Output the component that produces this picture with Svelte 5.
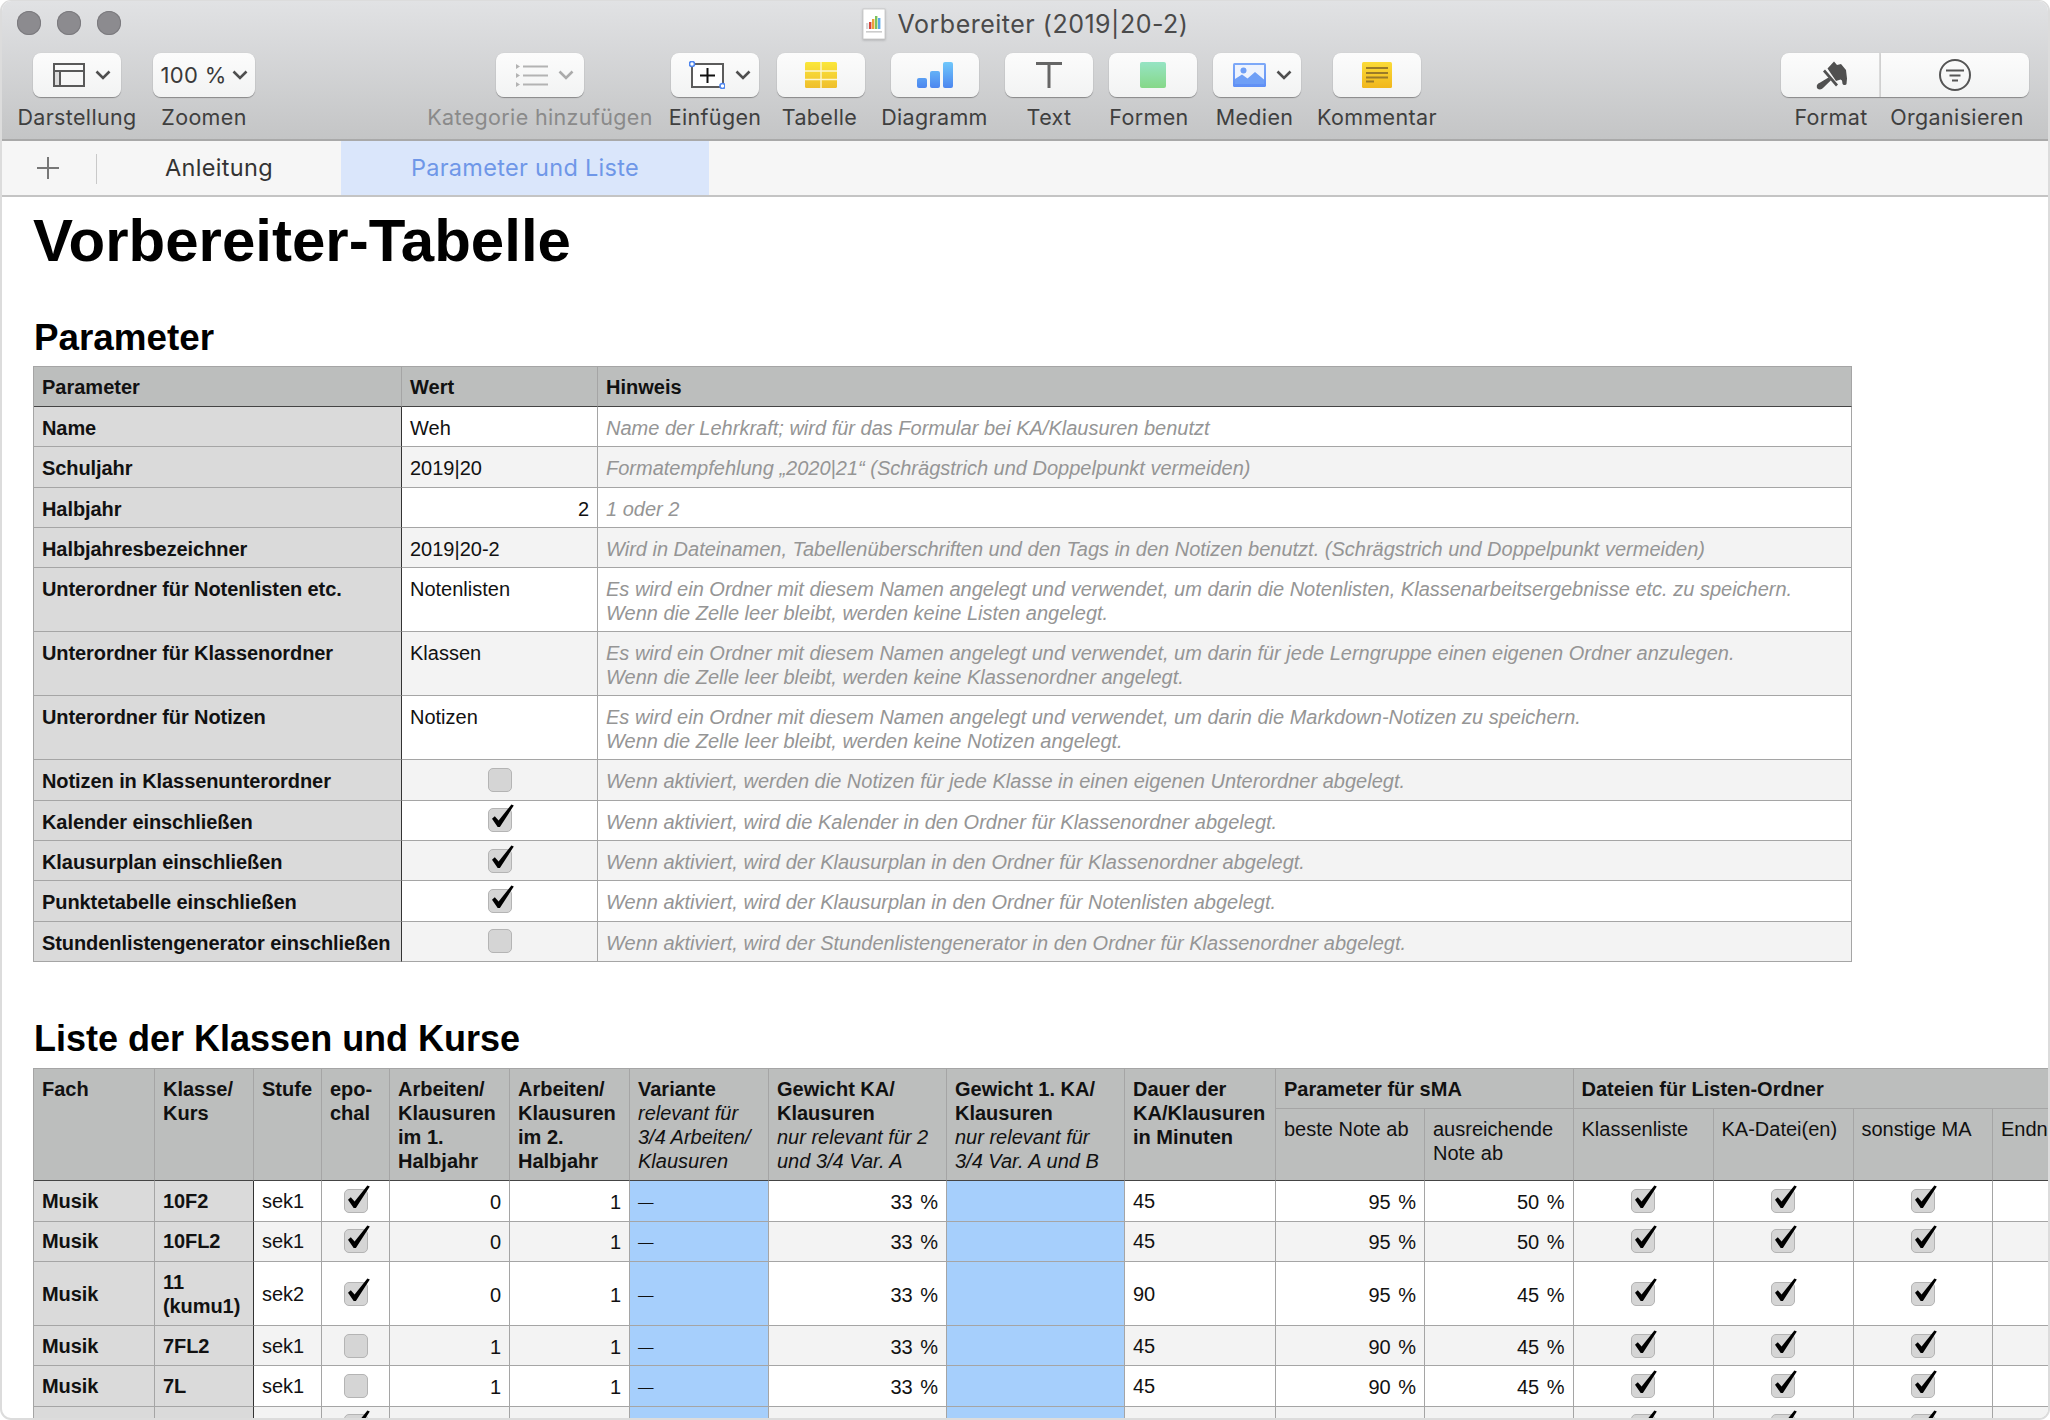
<script>
	const params = [
		{ name: 'Name', value: 'Weh', hint: ['Name der Lehrkraft; wird für das Formular bei KA/Klausuren benutzt'] },
		{ name: 'Schuljahr', value: '2019|20', hint: ['Formatempfehlung „2020|21“ (Schrägstrich und Doppelpunkt vermeiden)'] },
		{ name: 'Halbjahr', value: '2', num: true, hint: ['1 oder 2'] },
		{ name: 'Halbjahresbezeichner', value: '2019|20-2', hint: ['Wird in Dateinamen, Tabellenüberschriften und den Tags in den Notizen benutzt. (Schrägstrich und Doppelpunkt vermeiden)'] },
		{ name: 'Unterordner für Notenlisten etc.', value: 'Notenlisten', hint: ['Es wird ein Ordner mit diesem Namen angelegt und verwendet, um darin die Notenlisten, Klassenarbeitsergebnisse etc. zu speichern.', 'Wenn die Zelle leer bleibt, werden keine Listen angelegt.'] },
		{ name: 'Unterordner für Klassenordner', value: 'Klassen', hint: ['Es wird ein Ordner mit diesem Namen angelegt und verwendet, um darin für jede Lerngruppe einen eigenen Ordner anzulegen.', 'Wenn die Zelle leer bleibt, werden keine Klassenordner angelegt.'] },
		{ name: 'Unterordner für Notizen', value: 'Notizen', hint: ['Es wird ein Ordner mit diesem Namen angelegt und verwendet, um darin die Markdown-Notizen zu speichern.', 'Wenn die Zelle leer bleibt, werden keine Notizen angelegt.'] },
		{ name: 'Notizen in Klassenunterordner', check: false, hint: ['Wenn aktiviert, werden die Notizen für jede Klasse in einen eigenen Unterordner abgelegt.'] },
		{ name: 'Kalender einschließen', check: true, hint: ['Wenn aktiviert, wird die Kalender in den Ordner für Klassenordner abgelegt.'] },
		{ name: 'Klausurplan einschließen', check: true, hint: ['Wenn aktiviert, wird der Klausurplan in den Ordner für Klassenordner abgelegt.'] },
		{ name: 'Punktetabelle einschließen', check: true, hint: ['Wenn aktiviert, wird der Klausurplan in den Ordner für Notenlisten abgelegt.'] },
		{ name: 'Stundenlistengenerator einschließen', check: false, hint: ['Wenn aktiviert, wird der Stundenlistengenerator in den Ordner für Klassenordner abgelegt.'] }
	];

	const heads = [
		{ bold: ['Fach'] },
		{ bold: ['Klasse/', 'Kurs'] },
		{ bold: ['Stufe'] },
		{ bold: ['epo-', 'chal'] },
		{ bold: ['Arbeiten/', 'Klausuren', 'im 1.', 'Halbjahr'] },
		{ bold: ['Arbeiten/', 'Klausuren', 'im 2.', 'Halbjahr'] },
		{ bold: ['Variante'], em: ['relevant für', '3/4 Arbeiten/', 'Klausuren'] },
		{ bold: ['Gewicht KA/', 'Klausuren'], em: ['nur relevant für 2', 'und 3/4 Var. A'] },
		{ bold: ['Gewicht 1. KA/', 'Klausuren'], em: ['nur relevant für', '3/4 Var. A und B'] },
		{ bold: ['Dauer der', 'KA/Klausuren', 'in Minuten'] }
	];

	const courses = [
		{ klasse: ['10F2'], stufe: 'sek1', epochal: true, a1: 0, a2: 1, dauer: 45, beste: 95, ausr: 50 },
		{ klasse: ['10FL2'], stufe: 'sek1', epochal: true, a1: 0, a2: 1, dauer: 45, beste: 95, ausr: 50 },
		{ klasse: ['11', '(kumu1)'], stufe: 'sek2', epochal: true, a1: 0, a2: 1, dauer: 90, beste: 95, ausr: 45, tall: true },
		{ klasse: ['7FL2'], stufe: 'sek1', epochal: false, a1: 1, a2: 1, dauer: 45, beste: 90, ausr: 45 },
		{ klasse: ['7L'], stufe: 'sek1', epochal: false, a1: 1, a2: 1, dauer: 45, beste: 90, ausr: 45 },
		{ klasse: ['8F1'], stufe: 'sek1', epochal: true, a1: 1, a2: 1, dauer: 45, beste: 90, ausr: 45 }
	];
</script>

{#snippet chevron(muted = false)}
	<svg class="chev" class:muted viewBox="0 0 16 10" width="16" height="10">
		<path d="M1.500 1.500 8 8l6.500-6.500" />
	</svg>
{/snippet}

{#snippet checkbox(on)}
	<span class="box">
		{#if on}
			<svg class="tick" viewBox="0 0 24 24" width="24" height="24">
				<path d="M4 10.700 6.800 8.300 10.600 12.600 23.400-3.600 25.800-2.400 11.900 19H9.700Z" />
			</svg>
		{/if}
	</span>
{/snippet}

<div class="window">
	<header class="chrome">
		<div class="titlebar">
			<div class="lights"><i></i><i></i><i></i></div>
			<div class="title">
				<svg class="doc" viewBox="0 0 24 32" width="24" height="32">
					<rect x="1" y="1" width="22" height="30" fill="#fff" stroke="#c4c4c4" stroke-width=".8" />
					<rect x="4" y="15" width="2.400" height="6" fill="#d8d8d8" />
					<rect x="7" y="14" width="2.400" height="7" fill="#d6433c" />
					<rect x="10" y="11" width="2.400" height="10" fill="#e9a13a" />
					<rect x="13" y="8" width="2.400" height="13" fill="#7cc35c" />
					<rect x="16" y="10" width="2.400" height="11" fill="#5aa9e8" />
					<rect x="4" y="23" width="16" height="1.600" fill="#ccc" />
				</svg>
				<span>Vorbereiter (2019|20-2)</span>
			</div>
		</div>

		<div class="toolbar">
			<div class="tool">
				<div class="btn dd">
					<svg viewBox="0 0 32 24" width="32" height="24">
						<rect x="1" y="8" width="6" height="15" fill="#dcdcdc" />
						<rect x="1" y="1" width="30" height="22" fill="none" stroke="#595959" stroke-width="2" />
						<path d="M1 8h30M7 8v15" fill="none" stroke="#595959" stroke-width="2" />
					</svg>
					{@render chevron()}
				</div>
				<span>Darstellung</span>
			</div>
			<div></div>
			<div class="tool">
				<div class="btn wide"><b>100 %</b>{@render chevron()}</div>
				<span>Zoomen</span>
			</div>
			<div></div>
			<div class="tool off">
				<div class="btn dd">
					<svg viewBox="0 0 32 24" width="32" height="24" fill="#b3b3b3">
						<path d="M0 1l4 2.500L0 6zM0 10l4 2.500L0 15zM0 19l4 2.500L0 24z" />
						<path d="M7 2.500h25v2H7zM7 11.500h25v2H7zM7 20.500h25v2H7z" />
					</svg>
					{@render chevron(true)}
				</div>
				<span>Kategorie hinzufügen</span>
			</div>
			<div></div>
			<div class="tool">
				<div class="btn dd">
					<svg viewBox="0 0 36 28" width="36" height="28">
						<rect x="3" y="3" width="31" height="23" fill="#fff" stroke="#5c5c5c" stroke-width="2" />
						<path d="M18.500 7v15M11 14.500h15" stroke="#111" stroke-width="2" />
						<circle cx="3" cy="3" r="2.500" fill="#fff" stroke="#4f86ee" stroke-width="1.600" />
						<circle cx="33.500" cy="25" r="2.500" fill="#fff" stroke="#4f86ee" stroke-width="1.600" />
					</svg>
					{@render chevron()}
				</div>
				<span>Einfügen</span>
			</div>
			<div class="tool nudge-s">
				<div class="btn">
					<svg viewBox="0 0 32 26" width="32" height="26">
						<defs>
							<linearGradient id="gy" x1="0" y1="0" x2="0" y2="1">
								<stop offset="0" stop-color="#fbe73a" />
								<stop offset="1" stop-color="#efbe2c" />
							</linearGradient>
						</defs>
						<rect width="32" height="26" rx="1.500" fill="url(#gy)" />
						<path d="M16 0v26M0 9h32M0 17.500h32" stroke="#fdf6cf" stroke-width="1.400" />
					</svg>
				</div>
				<span>Tabelle</span>
			</div>
			<div class="tool">
				<div class="btn">
					<svg viewBox="0 0 36 26" width="36" height="26">
						<defs>
							<linearGradient id="gb" x1="0" y1="0" x2="0" y2="26" gradientUnits="userSpaceOnUse">
								<stop offset="0" stop-color="#70c8fb" />
								<stop offset="1" stop-color="#4c86ef" />
							</linearGradient>
						</defs>
						<g fill="url(#gb)">
							<rect x="0" y="16" width="10" height="10" rx="2" />
							<rect x="13" y="9" width="10" height="17" rx="2" />
							<rect x="26" y="0" width="10" height="26" rx="2" />
						</g>
					</svg>
				</div>
				<span>Diagramm</span>
			</div>
			<div class="tool">
				<div class="btn">
					<svg viewBox="0 0 26 26" width="26" height="26">
						<path d="M0 1.500h26M13 1.500V26" fill="none" stroke="#666" stroke-width="3" />
					</svg>
				</div>
				<span>Text</span>
			</div>
			<div class="tool nudge-l">
				<div class="btn">
					<svg viewBox="0 0 26 26" width="26" height="26">
						<defs>
							<linearGradient id="gg" x1="0" y1="0" x2="0" y2="1">
								<stop offset="0" stop-color="#96e4c4" />
								<stop offset="1" stop-color="#86d888" />
							</linearGradient>
						</defs>
						<rect width="26" height="26" rx="2" fill="url(#gg)" />
					</svg>
				</div>
				<span>Formen</span>
			</div>
			<div class="tool nudge-m">
				<div class="btn dd">
					<svg viewBox="0 0 33 24" width="33" height="24">
						<defs>
							<linearGradient id="gm" x1="0" y1="0" x2="0" y2="1">
								<stop offset="0" stop-color="#7ea9f8" />
								<stop offset="1" stop-color="#5f8ff5" />
							</linearGradient>
						</defs>
						<rect width="33" height="24" rx="1.500" fill="url(#gm)" />
						<rect x="2" y="2" width="29" height="15" fill="#eef3fd" />
						<path d="M2 21V16l7-4.500 5.500 4L22 9l9 7.500V21z" fill="#6f9ff6" />
						<circle cx="10.500" cy="7.500" r="3" fill="#6f9ff6" />
					</svg>
					{@render chevron()}
				</div>
				<span>Medien</span>
			</div>
			<div class="tool">
				<div class="btn">
					<svg viewBox="0 0 30 26" width="30" height="26">
						<defs>
							<linearGradient id="gn" x1="0" y1="0" x2="0" y2="1">
								<stop offset="0" stop-color="#fbdb38" />
								<stop offset="1" stop-color="#f1b71c" />
							</linearGradient>
						</defs>
						<rect width="30" height="26" rx="1.500" fill="url(#gn)" />
						<path d="M4 6h22M4 11h22M4 15.500h22M4 19.500h8" stroke="#9b7b28" stroke-width="2" />
					</svg>
				</div>
				<span>Kommentar</span>
			</div>
			<div></div>
			<div class="tool split-l">
				<div class="btn">
					<svg viewBox="10 8 36 32" width="36" height="32" fill="#505050">
						<path d="M23.500 17.500 30 10.500l3 3.500 4-1 5 6 1 8.500-.5 5.500c-.8 1.600-3.400 1.400-4-.3l-.5-3.200-1.500-1-4.500 1.500z" />
						<path d="M19 20.500l2-2 13 15-2 2z" />
						<path d="M24.500 26.500l2.500 2.800-8 7.800c-1.500 2-5.500 2-6.200-.8-.5-2.500 1.500-4 3-4.500z" />
					</svg>
				</div>
				<span>Format</span>
			</div>
			<div class="tool split-r">
				<div class="btn">
					<svg viewBox="0 0 32 32" width="32" height="32" fill="none" stroke="#555" stroke-width="2">
						<circle cx="16" cy="16" r="15" />
						<path d="M7 11.500h18M10.500 16.500h11M13 21.500h6" />
					</svg>
				</div>
				<span>Organisieren</span>
			</div>
		</div>
	</header>

	<nav class="tabs">
		<span class="plus"></span>
		<span class="sep"></span>
		<span class="tab">Anleitung</span>
		<span class="tab active">Parameter und Liste</span>
	</nav>

	<main>
		<h1>Vorbereiter-Tabelle</h1>

		<h2 class="first">Parameter</h2>
		<div class="sheet params">
			<div class="c head">Parameter</div>
			<div class="c head">Wert</div>
			<div class="c head">Hinweis</div>
			{#each params as row, i}
				{@const alt = i % 2 === 1}
				<div class="c lbl" class:tall={row.hint.length > 1}>{row.name}</div>
				<div class="c" class:alt class:num={row.num} class:mid={row.check !== undefined}>
					{#if row.check !== undefined}
						{@render checkbox(row.check)}
					{:else}
						{row.value}
					{/if}
				</div>
				<div class="c hint" class:alt>
					{#each row.hint as line}
						<div>{line}</div>
					{/each}
				</div>
			{/each}
		</div>

		<h2 class="second">Liste der Klassen und Kurse</h2>
		<div class="sheet courses">
			{#each heads as h}
				<div class="c head span2">
					{#each h.bold as line}<div>{line}</div>{/each}
					{#if h.em}
						{#each h.em as line}<div class="em">{line}</div>{/each}
					{/if}
				</div>
			{/each}
			<div class="c head group cols2">Parameter für sMA</div>
			<div class="c head group cols4">Dateien für Listen-Ordner</div>
			<div class="c head sub">beste Note ab</div>
			<div class="c head sub">ausreichende<br />Note ab</div>
			<div class="c head sub">Klassenliste</div>
			<div class="c head sub">KA-Datei(en)</div>
			<div class="c head sub">sonstige MA</div>
			<div class="c head sub">Endnoten</div>

			{#each courses as row, i}
				{@const alt = i % 2 === 1}
				<div class="c lbl vc" class:tall={row.tall}>Musik</div>
				<div class="c lbl vc kl" class:tall={row.tall}>
					<div>{#each row.klasse as line}<div>{line}</div>{/each}</div>
				</div>
				<div class="c vc" class:alt>{row.stufe}</div>
				<div class="c vc mid" class:alt>{@render checkbox(row.epochal)}</div>
				<div class="c vc num" class:alt>{row.a1}</div>
				<div class="c vc num" class:alt>{row.a2}</div>
				<div class="c vc blue dash">—</div>
				<div class="c vc num" class:alt>33 %</div>
				<div class="c vc blue"></div>
				<div class="c vc" class:alt>{row.dauer}</div>
				<div class="c vc num" class:alt>{row.beste} %</div>
				<div class="c vc num" class:alt>{row.ausr} %</div>
				<div class="c vc mid" class:alt>{@render checkbox(true)}</div>
				<div class="c vc mid" class:alt>{@render checkbox(true)}</div>
				<div class="c vc mid" class:alt>{@render checkbox(true)}</div>
				<div class="c vc" class:alt></div>
			{/each}
		</div>
	</main>
</div>

<style>
	:global(body) {
		margin: 0;
		background: #fff;
	}

	.window {
		box-sizing: border-box;
		width: 2050px;
		height: 1420px;
		overflow: hidden;
		border: 2px solid #dcdcdc;
		border-top-width: 1px;
		border-radius: 11px;
		background: #fff;
		font-family: "Liberation Sans", Arial, sans-serif;
		color: #111;
	}

	.chrome {
		height: 138px;
		background: linear-gradient(#e1e2e4, #c4c5c6);
		border-bottom: 2px solid #a9a9a9;
		font-family: Inter, "Liberation Sans", sans-serif;
	}

	.titlebar {
		position: relative;
		display: flex;
		justify-content: center;
		align-items: center;
		height: 46px;
	}

	.lights {
		position: absolute;
		left: 15px;
		top: 10px;
		display: flex;
		gap: 16px;
	}

	.lights i {
		width: 24px;
		height: 24px;
		border-radius: 50%;
		background: #8c8b8f;
		box-shadow: inset 0 0 0 1px #7b7a7e;
	}

	.title {
		display: flex;
		align-items: center;
		gap: 12px;
		font-size: 25px;
		letter-spacing: 0.5px;
		color: #4a4a4a;
	}

	.doc {
		filter: drop-shadow(0 1px 1px #0003);
	}

	.toolbar {
		display: grid;
		grid-template-columns: 118px 26px 84px 179px 230px 10px 100px 112px 115px 114px 94px 114px 126px 341px 100px 150px;
		padding: 6px 0 0 16px;
	}

	.tool {
		display: flex;
		flex-direction: column;
		align-items: center;
		font-size: 21.500px;
		letter-spacing: 0.35px;
		line-height: 26px;
		color: #3f3f3f;
		white-space: nowrap;
	}

	.tool.off > span {
		color: #8a8a8a;
	}

	.nudge-s > span {
		margin-right: 3px;
	}

	.nudge-m > span {
		margin-right: 5px;
	}

	.nudge-l > span {
		margin-right: 8px;
	}

	.btn {
		box-sizing: border-box;
		display: flex;
		justify-content: center;
		align-items: center;
		gap: 10px;
		width: 88px;
		height: 44px;
		margin-bottom: 7px;
		border-radius: 8px;
		background: linear-gradient(#fcfcfc, #f2f3f3);
		box-shadow: 0 1px 1px #0005, 0 0 1px #0002;
	}

	.btn.dd {
		padding-left: 10px;
	}

	.btn.wide {
		width: 102px;
		gap: 5px;
	}

	.btn b {
		font-weight: 400;
		font-size: 22px;
		color: #3a3a3a;
	}

	.split-l {
		align-items: flex-end;
	}

	.split-l .btn {
		width: 100px;
		padding-left: 3px;
		border-radius: 8px 0 0 8px;
		border-right: 2px solid #dadada;
	}

	.split-l > span {
		width: 100px;
		text-align: center;
	}

	.split-r .btn {
		width: 148px;
		margin-right: 2px;
		border-radius: 0 8px 8px 0;
	}

	.split-r > span {
		margin-left: 2px;
	}

	.chev {
		fill: none;
		stroke: #4f4f4f;
		stroke-width: 2.600;
	}

	.chev.muted {
		stroke: #ababab;
	}

	.tabs {
		display: flex;
		height: 54px;
		align-items: stretch;
		background: #f6f6f6;
		border-bottom: 2px solid #c4c4c4;
		font-family: Inter, "Liberation Sans", sans-serif;
		font-size: 23.500px;
		letter-spacing: 0.3px;
		line-height: 54px;
		color: #333;
	}

	.plus {
		width: 22px;
		height: 22px;
		margin: 16px 0 0 35px;
		background: linear-gradient(#777, #777) center / 100% 2px no-repeat,
			linear-gradient(#777, #777) center / 2px 100% no-repeat;
	}

	.sep {
		width: 1px;
		height: 30px;
		margin: 13px 0 0 37px;
		background: #c9c9c9;
	}

	.tab {
		width: 244px;
		text-align: center;
	}

	.tab.active {
		width: 368px;
		background: #dae6fb;
		color: #6f97e8;
	}

	main {
		padding-left: 31px;
	}

	h1 {
		margin: 0;
		padding-top: 9px;
		font-size: 60px;
		line-height: 70px;
		color: #000;
	}

	h2 {
		margin: 0;
		padding-left: 1px;
		font-size: 36.800px;
		line-height: 46px;
		color: #000;
	}

	h2.first {
		padding-top: 39px;
		padding-bottom: 5px;
	}

	h2.second {
		padding-top: 54px;
		padding-bottom: 6px;
		font-size: 36px;
	}

	.sheet {
		display: grid;
		width: max-content;
		font-size: 20px;
		line-height: 24px;
		border-top: 1px solid #a5a5a5;
		border-left: 1px solid #a5a5a5;
	}

	.params {
		grid-template-columns: 368px 196px 1254px;
	}

	.courses {
		grid-template-columns: 121px 99px 68px 68px 120px 120px 139px 178px 178px 151px 149px 148.500px 140px 140px 139.500px 140px;
	}

	.c {
		box-sizing: border-box;
		min-height: 40.330px;
		padding: 9px 8px 6px;
		border-right: 1px solid #a5a5a5;
		border-bottom: 1px solid #a5a5a5;
		background: #fff;
	}

	.c.tall {
		min-height: 64px;
	}

	.c.head {
		min-height: 40px;
		padding-top: 8px;
		background: #bcbebd;
		font-weight: 700;
		border-bottom-color: #444;
	}

	.c.lbl {
		background: #dadada;
		font-weight: 700;
		letter-spacing: -0.08px;
		white-space: nowrap;
	}

	.params .lbl,
	.kl {
		border-right-color: #333;
	}

	.c.alt {
		background: #f3f3f3;
	}

	.c.blue {
		background: #a6cffc;
	}

	.dash {
		font-size: 15.500px;
	}

	.num {
		text-align: right;
		word-spacing: 2px;
	}

	.hint {
		font-style: italic;
		color: #959595;
	}

	.mid {
		display: flex;
		justify-content: center;
		align-items: center;
		padding: 0;
	}

	.vc {
		display: flex;
		align-items: center;
		padding-top: 0;
		padding-bottom: 0;
	}

	.vc.num {
		justify-content: flex-end;
		padding-top: 2px;
	}

	.vc.dash {
		padding-top: 2px;
	}

	.vc.mid {
		justify-content: center;
	}

	.c.head.span2 {
		grid-row: span 2;
		padding-top: 8px;
	}

	.em {
		font-weight: 400;
		font-style: italic;
	}

	.c.head.group {
		padding-top: 8px;
		border-bottom-color: #a5a5a5;
	}

	.cols2 {
		grid-column: span 2;
	}

	.cols4 {
		grid-column: span 4;
	}

	.c.head.sub {
		min-height: 72.400px;
		padding-top: 8px;
		font-weight: 400;
	}

	.box {
		position: relative;
		box-sizing: border-box;
		display: block;
		width: 24px;
		height: 24px;
		border: 1px solid #b4b4b4;
		border-radius: 5px;
		background: #d5d5d5;
	}

	.tick {
		position: absolute;
		left: -1px;
		top: -1px;
		overflow: visible;
	}
</style>
